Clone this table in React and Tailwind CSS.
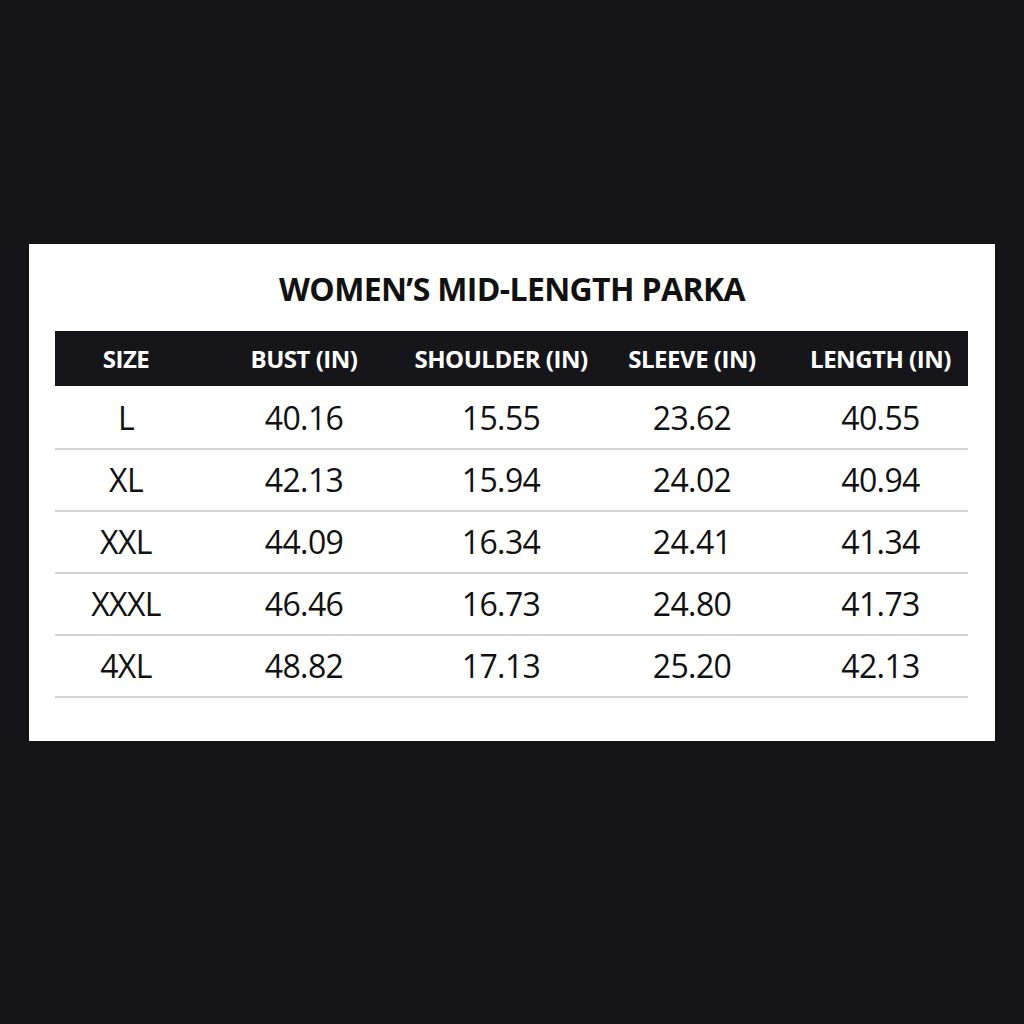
const headers = ["SIZE", "BUST (IN)", "SHOULDER (IN)", "SLEEVE (IN)", "LENGTH (IN)"];

const rows = [
  ["L", "40.16", "15.55", "23.62", "40.55"],
  ["XL", "42.13", "15.94", "24.02", "40.94"],
  ["XXL", "44.09", "16.34", "24.41", "41.34"],
  ["XXXL", "46.46", "16.73", "24.80", "41.73"],
  ["4XL", "48.82", "17.13", "25.20", "42.13"],
];

const cols = "grid grid-cols-[142px_214px_180px_202px_175px]";

const App = () => {
  return (
    <div
      className="w-[1024px] h-[1024px] bg-[#141417] pt-[244px]"
      style={{ fontFamily: '"Open Sans", "Noto Sans", sans-serif' }}
    >
      <div className="mx-[29px] w-[966px] h-[497px] bg-white px-[26px]">
        <h1 className="pt-[21px] h-[87px] text-center text-[32px] font-bold text-[#111] tracking-[-0.02em] leading-[47px]">
          WOMEN&rsquo;S MID-LENGTH PARKA
        </h1>
        <div className="w-[913px]">
          <div className={`${cols} h-[55px] bg-[#16161a] items-center text-white text-[24px] font-bold tracking-[-0.02em]`}>
            {headers.map((h) => (
              <div key={h} className="text-center">
                {h}
              </div>
            ))}
          </div>
          {rows.map((r, idx) => (
            <div
              key={r[0]}
              className={`${cols} ${idx === 0 ? "h-[64px] pt-[2px]" : "h-[62px]"} items-center border-b-2 border-[#d4d4d4] text-[32px] text-[#111] tracking-[-0.02em]`}
            >
              {r.map((c, i) => (
                <div key={i} className="text-center">
                  {c}
                </div>
              ))}
            </div>
          ))}
        </div>
      </div>
    </div>
  );
};

export default App;
